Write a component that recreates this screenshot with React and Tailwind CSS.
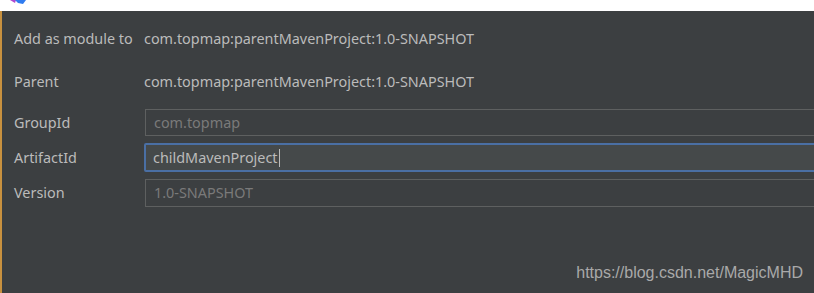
import React from 'react';

const font = { fontFamily: '"Noto Sans", "Open Sans", sans-serif' };

const Row = ({ label, className, children }) => (
  <div className={`flex items-center ${className}`}>
    <div className="w-[130px] shrink-0 text-[14.4px] text-[#bbbbbb]">{label}</div>
    {children}
  </div>
);

const Field = ({ value, focused, disabled }) => (
  <div
    className={
      focused
        ? 'flex-1 -mr-4 h-full flex items-center pl-[7px] border-2 border-[#4a6fa4] bg-[#45494a] rounded-[2px]'
        : 'flex-1 -mr-4 h-full flex items-center pl-[8px] border border-[#5e6060] ml-[1px]'
    }
  >
    <span className={`text-[14.4px] ${disabled ? 'text-[#7a7a7a]' : 'text-[#bbbbbb]'}`}>{value}</span>
    {focused && <span className="w-px h-[18px] bg-[#bbbbbb] ml-px" />}
  </div>
);

export default function App() {
  return (
    <div className="w-[814px] h-[293px] overflow-hidden bg-[#3c3f41] flex flex-col" style={font}>
      {/* top strip of the window behind */}
      <div className="h-[11px] bg-white shrink-0 relative">
        <svg className="absolute left-[10px] top-0" width="16" height="5" viewBox="0 0 16 5">
          <path d="M0 0 L6 0 L5 3 Z" fill="#b04ad0" />
          <path d="M5 0 L16 0 L13 4 L8 3 Z" fill="#2f7cf0" />
        </svg>
      </div>
      <div className="flex-1 flex border-l-2 border-[#c8913f]">
        <div className="flex-1 flex flex-col pl-[12px]">
          <Row label="Add as module to" className="mt-[14px] h-[28px]">
            <span className="text-[14.4px] text-[#bbbbbb]">com.topmap:parentMavenProject:1.0-SNAPSHOT</span>
          </Row>
          <Row label="Parent" className="mt-[15px] h-[28px]">
            <span className="text-[14.4px] text-[#bbbbbb]">com.topmap:parentMavenProject:1.0-SNAPSHOT</span>
          </Row>
          <Row label="GroupId" className="mt-[13px] h-[27px]">
            <Field value="com.topmap" disabled />
          </Row>
          <Row label="ArtifactId" className="mt-[7px] h-[29px]">
            <Field value="childMavenProject" focused />
          </Row>
          <Row label="Version" className="mt-[7px] h-[28px]">
            <Field value="1.0-SNAPSHOT" disabled />
          </Row>
          <div className="flex-1 flex items-end justify-end pr-[11px] pb-[8px]">
            <span
              className="text-[16px] text-[#a9a9a9]"
              style={{ fontFamily: '"Liberation Sans", Arial, sans-serif' }}
            >
              https://blog.csdn.net/MagicMHD
            </span>
          </div>
        </div>
      </div>
    </div>
  );
}
